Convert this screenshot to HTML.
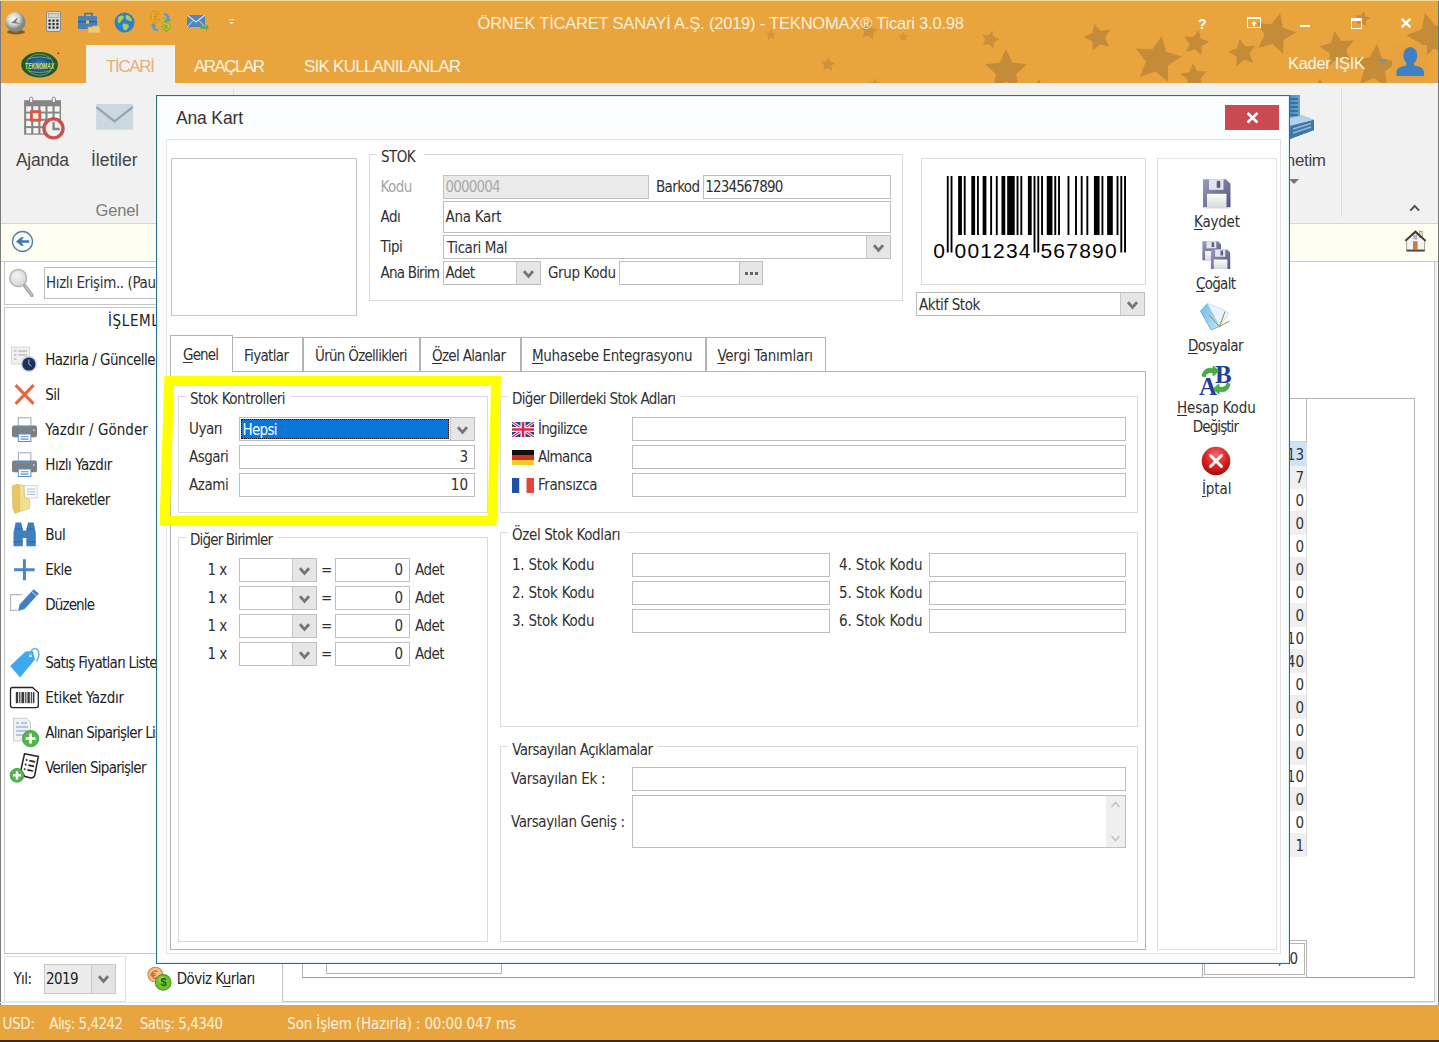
<!DOCTYPE html>
<html lang="tr"><head><meta charset="utf-8"><title>TEKNOMAX Ticari - Ana Kart</title><style>
html,body{margin:0;padding:0;background:#fff;width:1439px;height:1042px;overflow:hidden}
#w{position:relative;width:1439px;height:1042px;overflow:hidden;background:#fff}
#w>div,#w>svg,#w>span{position:absolute;box-sizing:content-box}
.t{white-space:nowrap;display:block}
u{text-decoration:underline;text-underline-offset:2px;text-decoration-thickness:1px;text-decoration-skip-ink:none}
</style></head><body><div id="w">
<div style="left:0px;top:0px;width:1439px;height:1042px;background:#ffffff;"></div>
<div style="left:0px;top:0px;width:1439px;height:83px;background:#E9A43E;"></div>
<div style="left:0px;top:0px;width:1439px;height:1px;background:#F3DC9A;"></div>
<svg style="left:700px;top:1px;" width="738" height="82" viewBox="700 1 738 82"><g fill="#C48C38"><polygon points="771.0,29.5 772.6,32.9 776.2,33.3 773.5,35.8 774.2,39.4 771.0,37.6 767.8,39.4 768.5,35.8 765.8,33.3 769.4,32.9" fill-opacity="0.6"/><polygon points="828.7,57.0 830.4,61.8 835.3,62.8 831.3,65.9 831.9,70.9 827.7,68.1 823.1,70.2 824.5,65.3 821.1,61.6 826.1,61.4" fill-opacity="0.75"/><polygon points="870.6,21.6 872.3,27.8 878.4,29.7 873.0,33.1 873.2,39.5 868.2,35.5 862.2,37.6 864.5,31.6 860.6,26.5 867.0,26.9" fill-opacity="0.75"/><polygon points="903.0,32.0 904.4,35.1 907.8,35.5 905.3,37.7 905.9,41.0 903.0,39.4 900.1,41.0 900.7,37.7 898.2,35.5 901.6,35.1" fill-opacity="0.6"/><polygon points="992.5,30.3 993.5,36.6 999.5,39.0 993.8,42.0 993.4,48.4 988.8,43.9 982.6,45.5 985.4,39.7 982.0,34.3 988.4,35.2" fill-opacity="0.85"/><polygon points="1006.0,49.0 1012.2,62.5 1026.9,64.2 1016.0,74.3 1018.9,88.8 1006.0,81.6 993.1,88.8 996.0,74.3 985.1,64.2 999.8,62.5"/><polygon points="875.0,78.0 876.7,81.7 880.7,82.1 877.7,84.9 878.5,88.9 875.0,86.9 871.5,88.9 872.3,84.9 869.3,82.1 873.3,81.7" fill-opacity="0.6"/><polygon points="1039.0,79.0 1041.0,83.3 1045.7,83.8 1042.2,87.0 1043.1,91.7 1039.0,89.4 1034.9,91.7 1035.8,87.0 1032.3,83.8 1037.0,83.3"/><polygon points="1094.2,23.5 1100.5,31.0 1110.2,29.6 1105.0,37.9 1109.3,46.6 1099.8,44.2 1092.8,51.0 1092.2,41.3 1083.5,36.7 1092.6,33.1"/><polygon points="1161.8,35.9 1166.0,51.8 1181.8,56.6 1167.9,65.5 1168.2,82.0 1155.5,71.6 1139.9,77.0 1145.9,61.6 1135.9,48.5 1152.3,49.4"/><polygon points="1198.8,29.8 1200.8,38.7 1209.4,41.6 1201.6,46.2 1201.5,55.3 1194.7,49.3 1186.0,52.0 1189.6,43.7 1184.3,36.2 1193.4,37.1"/><polygon points="1192.8,63.1 1197.5,71.2 1206.9,71.5 1200.5,78.5 1203.2,87.6 1194.6,83.7 1186.8,89.0 1187.8,79.6 1180.4,73.9 1189.6,71.9"/><polygon points="1239.5,38.8 1245.3,46.6 1255.1,45.8 1249.4,53.7 1253.3,62.7 1243.9,59.8 1236.6,66.2 1236.5,56.5 1228.1,51.5 1237.3,48.3"/><polygon points="1280.2,13.1 1282.9,27.4 1296.4,32.5 1283.8,39.5 1283.1,53.9 1272.5,44.0 1258.5,47.8 1264.7,34.7 1256.8,22.6 1271.1,24.4"/><polygon points="1334.3,30.8 1341.4,41.0 1353.8,40.3 1346.3,50.2 1350.8,61.9 1339.0,57.7 1329.4,65.6 1329.7,53.2 1319.2,46.4 1331.1,42.8"/><polygon points="1363.9,11.1 1365.3,16.3 1370.4,17.9 1365.9,20.8 1366.0,26.2 1361.8,22.8 1356.7,24.6 1358.7,19.5 1355.4,15.2 1360.8,15.5"/><polygon points="1377.0,44.1 1382.2,58.7 1397.4,61.8 1385.2,71.3 1386.8,86.7 1374.0,78.0 1359.9,84.4 1364.2,69.5 1353.8,58.0 1369.3,57.5"/><polygon points="1425.0,12.7 1435.5,25.9 1452.2,23.8 1443.0,37.8 1450.2,53.1 1433.9,48.6 1421.6,60.2 1420.8,43.4 1406.1,35.3 1421.8,29.3"/><polygon points="1320.0,78.0 1322.8,84.1 1329.5,84.9 1324.6,89.5 1325.9,96.1 1320.0,92.8 1314.1,96.1 1315.4,89.5 1310.5,84.9 1317.2,84.1"/></g></svg>
<span class="t" style="top:13.38px;font-size:16.5px;line-height:21px;font-family:'Liberation Sans',sans-serif;color:#FBEFD8;letter-spacing:-0.199px;left:477.50px;">ÖRNEK TİCARET SANAYİ A.Ş. (2019) - TEKNOMAX® Ticari 3.0.98</span>
<span class="t" style="top:14.75px;font-size:14px;line-height:18px;font-family:'Liberation Sans',sans-serif;color:#FFFFFF;font-weight:bold;left:1198.00px;">?</span>
<svg style="left:1247px;top:17px;" width="14" height="11" viewBox="0 0 14 11"><rect x="0.5" y="0.5" width="13" height="10" fill="none" stroke="#fff"/><rect x="0" y="0" width="14" height="2" fill="#fff"/><path d="M7 4 L4 7 H6 V9 H8 V7 H10 Z" fill="#fff"/></svg>
<div style="left:1300px;top:25px;width:10px;height:2px;background:#FFFFFF;"></div>
<svg style="left:1351px;top:18px;" width="11" height="11" viewBox="0 0 11 11"><rect x="0.5" y="0.5" width="10" height="10" fill="none" stroke="#fff"/><rect x="0" y="0" width="11" height="3" fill="#fff"/></svg>
<svg style="left:1401px;top:18px;" width="10" height="10" viewBox="0 0 10 10"><path d="M0.8 0.8 L9.2 9.2 M9.2 0.8 L0.8 9.2" stroke="#fff" stroke-width="2.3" fill="none"/></svg>
<svg style="left:4px;top:11px;" width="24" height="24" viewBox="0 0 24 24"><defs><radialGradient id="g1" cx="40%" cy="35%"><stop offset="0" stop-color="#fff"/><stop offset="0.6" stop-color="#cfd6d2"/><stop offset="1" stop-color="#7d8b86"/></radialGradient></defs><ellipse cx="12" cy="21" rx="9" ry="2.5" fill="#8a5a20"/><circle cx="11.5" cy="11" r="10" fill="url(#g1)"/><path d="M7 12 L14 6 L12 11 L17 13 Z" fill="#8b7b6b"/></svg>
<svg style="left:46px;top:11px;" width="15" height="21" viewBox="0 0 15 21"><rect x="0.5" y="0.5" width="14" height="20" rx="1.5" fill="#d9d9d9" stroke="#8a8a8a"/><rect x="2.5" y="2.5" width="10" height="4" fill="#c9d6c4" stroke="#888" stroke-width="0.5"/><g fill="#2a2a2a"><rect x="2.5" y="8.5" width="2.2" height="2.2"/><rect x="6.4" y="8.5" width="2.2" height="2.2"/><rect x="10.3" y="8.5" width="2.2" height="2.2"/><rect x="2.5" y="12" width="2.2" height="2.2"/><rect x="6.4" y="12" width="2.2" height="2.2"/><rect x="10.3" y="12" width="2.2" height="2.2"/><rect x="2.5" y="15.5" width="2.2" height="2.2"/><rect x="6.4" y="15.5" width="2.2" height="2.2"/><rect x="10.3" y="15.5" width="2.2" height="2.2"/></g></svg>
<svg style="left:78px;top:12px;" width="23" height="22" viewBox="0 0 23 22"><path d="M7 4 V1.5 H14 V4" fill="none" stroke="#3f74ad" stroke-width="1.6"/><rect x="0" y="4" width="19" height="13" rx="1" fill="#4a80b8"/><rect x="0" y="9" width="19" height="1.4" fill="#2f5f96"/><rect x="8" y="8.5" width="3" height="3" fill="#e9c56a"/><path d="M10 15 H14 L15 14 H22 V21 H10 Z" fill="#f0c878" stroke="#d6a850" stroke-width="0.6"/></svg>
<svg style="left:114px;top:12px;" width="21" height="21" viewBox="0 0 21 21"><circle cx="10.5" cy="10.5" r="10" fill="#2f7fd0"/><path d="M4 6 C6 3 9 3 10 5 C9 8 7 8 6 11 C5 12 3 10 4 6 Z M12 3 C15 3 18 6 18 9 C16 10 15 8 13 8 C12 6 11 5 12 3 Z M9 12 C11 11 14 12 15 14 C14 17 12 19 10 18 C9 16 8 14 9 12 Z" fill="#a8d04a"/></svg>
<span class="t" style="left:150px;top:8px;font:bold 17px 'Liberation Sans',sans-serif;color:#f2b91e;-webkit-text-stroke:0.5px #b9860b">€</span>
<span class="t" style="left:161px;top:15px;font:bold 17px 'Liberation Sans',sans-serif;color:#b9d33a;-webkit-text-stroke:0.5px #7c9a1c">$</span>
<svg style="left:149px;top:11px;" width="23" height="22" viewBox="0 0 23 22"><path d="M15 2 C19 2 21 5 20 8 L22 8 L18.5 11 L16 7.5 L18 7.5 C18 5.5 17 4.5 15 4 Z" fill="#5a9ad8"/><path d="M9 20 C5 20 3 18 3 15 L1 15 L4.5 12 L7.5 15.5 L5.5 15.5 C6 17 7 18 9 18 Z" fill="#5a9ad8"/></svg>
<svg style="left:187px;top:15px;" width="22" height="16" viewBox="0 0 22 16"><rect x="0" y="0" width="18" height="12" fill="#4f86c0"/><path d="M0 0 L9 7 L18 0" fill="none" stroke="#cfe0f2" stroke-width="1.3"/><path d="M0 12 L6 5.5 M18 12 L12 5.5" stroke="#cfe0f2" stroke-width="1"/><path d="M13 11 H19 V9 L22 12.5 L19 16 V14 H13 Z" fill="#6aa84f"/></svg>
<svg style="left:228px;top:19px;" width="8" height="6" viewBox="0 0 8 6"><rect x="1" y="0" width="5" height="1" fill="#fbe9c8"/><path d="M1 3 H6 L3.5 5.5 Z" fill="#fbe9c8"/></svg>
<svg style="left:20px;top:51px;" width="40" height="28" viewBox="0 0 40 28"><defs><radialGradient id="lg" cx="50%" cy="50%"><stop offset="0" stop-color="#3f86b5"/><stop offset="0.55" stop-color="#1f557d"/><stop offset="0.8" stop-color="#1b5a3a"/><stop offset="1" stop-color="#1f5f24"/></radialGradient></defs><ellipse cx="19.6" cy="13.7" rx="18.4" ry="12.7" fill="url(#lg)"/><ellipse cx="19.6" cy="13.7" rx="13.5" ry="10.6" fill="none" stroke="#b9cf5a" stroke-width="0.7" stroke-opacity="0.8"/><path d="M8 8 Q19.6 4 31 8 M8 19.5 Q19.6 23.5 31 19.5" fill="none" stroke="#cfe6f2" stroke-width="0.8" stroke-opacity="0.6"/><text x="19.6" y="17.6" font-family="Liberation Sans,sans-serif" font-weight="bold" font-style="italic" font-size="9.5" fill="#d3e23c" text-anchor="middle" textLength="29" lengthAdjust="spacingAndGlyphs">TEKNOMAX</text><circle cx="38.3" cy="2.3" r="0.9" fill="#6a4310"/></svg>
<div style="left:86px;top:45px;width:89px;height:38px;background:#F1F1F1;"></div>
<span class="t" style="top:56.21px;font-size:17px;line-height:22px;font-family:'Liberation Sans',sans-serif;color:#E5B074;letter-spacing:-1.347px;left:106.00px;">TİCARİ</span>
<span class="t" style="top:56.21px;font-size:17px;line-height:22px;font-family:'Liberation Sans',sans-serif;color:#FDF4E2;letter-spacing:-1.552px;left:194.00px;">ARAÇLAR</span>
<span class="t" style="top:56.21px;font-size:17px;line-height:22px;font-family:'Liberation Sans',sans-serif;color:#FDF4E2;letter-spacing:-0.759px;left:304.00px;">SIK KULLANILANLAR</span>
<span class="t" style="top:53.38px;font-size:16.5px;line-height:21px;font-family:'Liberation Sans',sans-serif;color:#FDF4E2;letter-spacing:-0.311px;left:1288.00px;">Kader IŞIK</span>
<svg style="left:1378px;top:59px;" width="9" height="6" viewBox="0 0 9 6"><path d="M0 0 H9 L4.5 5 Z" fill="#6f93bd"/></svg>
<div style="left:1392px;top:45px;width:35px;height:36px;background:#E6A23F;"></div>
<svg style="left:1395px;top:45px;" width="31" height="32" viewBox="0 0 31 32"><ellipse cx="15.3" cy="10.6" rx="7" ry="8.7" fill="#3F80C4"/><path d="M11.5 17 H19 V20.5 C24 21 28.5 23 29 27 V31 H1.5 V27 C2 23 6.5 21 11.5 20.5 Z" fill="#3F80C4"/></svg>
<div style="left:0px;top:83px;width:1439px;height:140px;background:#F1F1F1;"></div>
<div style="left:0px;top:223px;width:1439px;height:1px;background:#D5D5D5;"></div>
<svg style="left:20px;top:94px;" width="50" height="50" viewBox="20 94 50 50"><rect x="24.1" y="100.2" width="36.9" height="34.5" fill="#858585"/><g fill="#f6f6f6"><rect x="26.2" y="106.3" width="5" height="5.3"/><rect x="33.3" y="106.3" width="5" height="5.3"/><rect x="40.4" y="106.3" width="5" height="5.3"/><rect x="47.5" y="106.3" width="5" height="5.3"/><rect x="54.6" y="106.3" width="5" height="5.3"/><rect x="26.2" y="113.5" width="5" height="5.3"/><rect x="33.3" y="113.5" width="5" height="5.3"/><rect x="40.4" y="113.5" width="5" height="5.3"/><rect x="47.5" y="113.5" width="5" height="5.3"/><rect x="54.6" y="113.5" width="5" height="5.3"/><rect x="26.2" y="120.8" width="5" height="5.3"/><rect x="33.3" y="120.8" width="5" height="5.3"/><rect x="40.4" y="120.8" width="5" height="5.3"/><rect x="47.5" y="120.8" width="5" height="5.3"/><rect x="54.6" y="120.8" width="5" height="5.3"/><rect x="26.2" y="128.1" width="5" height="5.3"/><rect x="33.3" y="128.1" width="5" height="5.3"/><rect x="40.4" y="128.1" width="5" height="5.3"/><rect x="47.5" y="128.1" width="5" height="5.3"/><rect x="54.6" y="128.1" width="5" height="5.3"/></g><rect x="29.6" y="97.2" width="3.2" height="5.4" rx="1.4" fill="#f1f1f1" stroke="#858585" stroke-width="1"/><rect x="52.2" y="97.2" width="3.2" height="5.4" rx="1.4" fill="#f1f1f1" stroke="#858585" stroke-width="1"/><rect x="31.4" y="111.6" width="8.4" height="8.6" fill="#f3ece8" stroke="#D8593F" stroke-width="2.8"/><circle cx="53.5" cy="128.4" r="9.5" fill="#f1f1f1" stroke="#C8524B" stroke-width="3.4"/><path d="M53.6 122.2 V129 H59.6" fill="none" stroke="#8d7f8d" stroke-width="2.4"/></svg>
<span class="t" style="top:149.04px;font-size:17.5px;line-height:23px;font-family:'Liberation Sans',sans-serif;color:#444;letter-spacing:-0.300px;left:16.00px;">Ajanda</span>
<svg style="left:94px;top:102px;" width="42" height="30" viewBox="94 102 42 30"><rect x="96.1" y="104" width="36.9" height="25.8" rx="1.2" fill="#CCD8E0"/><path d="M96.4 107.2 L114.5 121.4 L132.7 107.2" fill="none" stroke="#8FA3B0" stroke-width="2.1"/></svg>
<span class="t" style="top:149.04px;font-size:17.5px;line-height:23px;font-family:'Liberation Sans',sans-serif;color:#444;letter-spacing:-0.027px;left:91.00px;">İletiler</span>
<span class="t" style="top:200.38px;font-size:16.5px;line-height:21px;font-family:'Liberation Sans',sans-serif;color:#7c7c7c;letter-spacing:-0.133px;left:95.50px;">Genel</span>
<div style="left:233px;top:90px;width:1px;height:127px;background:#DCDCDC;"></div>
<svg style="left:1276px;top:94px;" width="40" height="48" viewBox="0 0 40 48"><defs><linearGradient id="bt" x1="0" x2="1"><stop offset="0" stop-color="#3f7fb5"/><stop offset="1" stop-color="#6aa3d2"/></linearGradient></defs>
<rect x="8" y="1" width="16" height="26" fill="url(#bt)"/><path d="M10 5 H22 M10 9 H22 M10 13 H22 M10 17 H22 M10 21 H22" stroke="#2f6596" stroke-width="1.6"/>
<path d="M2 26 L26 21.5 L38 26 L38 36 L14 45 L2 39 Z" fill="#4a86b8"/><path d="M2 26 L26 21.5 L38 26 L14 32 Z" fill="#b4d3ea"/><path d="M14 32 L38 26 L38 36 L14 45 Z" fill="#3f78a8"/><path d="M2 26 L14 32 L14 45 L2 39 Z" fill="#cfe2f2"/><path d="M17 35 L35 29.5 M17 39 L35 33" stroke="#8fb8da" stroke-width="1.4"/><path d="M4 30 L12 34 M4 34 L12 38" stroke="#9fc0dc" stroke-width="1.2"/></svg>
<span class="t" style="top:149.71px;font-size:17px;line-height:22px;font-family:'Liberation Sans',sans-serif;color:#444;letter-spacing:-0.350px;right:113.35px;">Yönetim</span>
<svg style="left:1289px;top:179px;" width="10" height="5" viewBox="0 0 10 5"><path d="M0 0 H10 L5 5 Z" fill="#777"/></svg>
<div style="left:1341px;top:87px;width:1px;height:130px;background:#DCDCDC;"></div>
<svg style="left:1409px;top:204px;" width="12" height="8" viewBox="0 0 12 8"><path d="M1.2 6.6 L5.7 2 L10.2 6.6" fill="none" stroke="#555" stroke-width="2"/></svg>
<div style="left:0px;top:224px;width:1439px;height:36px;background:#FFFEF1;"></div>
<div style="left:0px;top:261px;width:1439px;height:1px;background:#C9C9C9;"></div>
<svg style="left:11px;top:230px;" width="23" height="23" viewBox="0 0 23 23"><circle cx="11.5" cy="11.5" r="10" fill="#FDFEFA" stroke="#4F7FAE" stroke-width="1.3"/><path d="M18.2 10.3 H10.5 L13 7.2 H10.2 L5 11.5 L10.2 15.8 H13 L10.5 12.7 H18.2 Z" fill="#3D78B5"/></svg>
<svg style="left:1404px;top:229px;" width="23" height="24" viewBox="0 0 23 24"><path d="M2.6 11 V22 H20.6 V11 L11.4 3 Z" fill="#F3F3F1" stroke="#8a8a86" stroke-width="0.8"/><rect x="2.6" y="20.6" width="18" height="1.8" fill="#4a4740"/><rect x="15.6" y="2.2" width="2.6" height="6" fill="#F0E6D2" stroke="#7d786c" stroke-width="0.7"/><path d="M11.4 1.3 L0.6 11.2 L2 12.6 L11.4 4.2 L20.9 12.6 L22.3 11.2 Z" fill="#3E3C34"/><rect x="9" y="12.3" width="4.6" height="8.6" fill="#CB7C3C"/><rect x="9.8" y="6.6" width="3" height="3.4" fill="#B9BEC9" stroke="#8e8e92" stroke-width="0.5"/></svg>
<div style="left:0px;top:1px;width:1px;height:1041px;background:#7a7a7a;"></div>
<div style="left:1438px;top:1px;width:1px;height:1041px;background:#767676;"></div>
<div style="left:4px;top:261px;width:277px;height:42px;background:#fff;border:1px solid #C6C6C6;"></div>
<svg style="left:7px;top:267px;" width="28" height="32" viewBox="0 0 28 32"><defs><radialGradient id="mg" cx="40%" cy="35%"><stop offset="0" stop-color="#f4f4f4"/><stop offset="1" stop-color="#dcdcdc"/></radialGradient></defs><path d="M17.5 18.5 L25 28.5" stroke="#9c9c9c" stroke-width="3.4" stroke-linecap="round"/><path d="M18 19 L25 28.5" stroke="#cfcfcf" stroke-width="1.2" stroke-linecap="round"/><circle cx="11.2" cy="11" r="8.4" fill="url(#mg)" stroke="#b4b4b4" stroke-width="1.5"/></svg>
<div style="left:44px;top:267px;width:237px;height:30px;background:#fff;border:1px solid #BDBDBD;"></div>
<span class="t" style="top:273.11px;font-size:15px;line-height:20px;font-family:'DejaVu Sans Condensed','Liberation Sans',sans-serif;color:#333;letter-spacing:-0.385px;left:46.00px;">Hızlı Erişim.. (Pause)</span>
<div style="left:4px;top:307px;width:277px;height:645px;background:#fff;border:1px solid #C6C6C6;"></div>
<span class="t" style="top:311.11px;font-size:15px;line-height:20px;font-family:'DejaVu Sans Condensed','Liberation Sans',sans-serif;color:#222;letter-spacing:0.621px;left:108.00px;">İŞLEMLER</span>
<span class="t" style="top:350.11px;font-size:15px;line-height:20px;font-family:'DejaVu Sans Condensed','Liberation Sans',sans-serif;color:#222;letter-spacing:-0.503px;left:45.20px;">Hazırla / Güncelle</span>
<span class="t" style="top:385.11px;font-size:15px;line-height:20px;font-family:'DejaVu Sans Condensed','Liberation Sans',sans-serif;color:#222;letter-spacing:-0.550px;left:45.20px;">Sil</span>
<span class="t" style="top:420.11px;font-size:15px;line-height:20px;font-family:'DejaVu Sans Condensed','Liberation Sans',sans-serif;color:#222;letter-spacing:0.028px;left:45.20px;">Yazdır / Gönder</span>
<span class="t" style="top:455.11px;font-size:15px;line-height:20px;font-family:'DejaVu Sans Condensed','Liberation Sans',sans-serif;color:#222;letter-spacing:-0.461px;left:45.20px;">Hızlı Yazdır</span>
<span class="t" style="top:490.11px;font-size:15px;line-height:20px;font-family:'DejaVu Sans Condensed','Liberation Sans',sans-serif;color:#222;letter-spacing:-0.591px;left:45.20px;">Hareketler</span>
<span class="t" style="top:525.11px;font-size:15px;line-height:20px;font-family:'DejaVu Sans Condensed','Liberation Sans',sans-serif;color:#222;letter-spacing:-0.550px;left:45.20px;">Bul</span>
<span class="t" style="top:560.11px;font-size:15px;line-height:20px;font-family:'DejaVu Sans Condensed','Liberation Sans',sans-serif;color:#222;letter-spacing:-0.550px;left:45.20px;">Ekle</span>
<span class="t" style="top:595.11px;font-size:15px;line-height:20px;font-family:'DejaVu Sans Condensed','Liberation Sans',sans-serif;color:#222;letter-spacing:-0.859px;left:45.20px;">Düzenle</span>
<span class="t" style="top:653.11px;font-size:15px;line-height:20px;font-family:'DejaVu Sans Condensed','Liberation Sans',sans-serif;color:#222;letter-spacing:-0.708px;left:45.20px;">Satış Fiyatları Listesi</span>
<span class="t" style="top:688.11px;font-size:15px;line-height:20px;font-family:'DejaVu Sans Condensed','Liberation Sans',sans-serif;color:#222;letter-spacing:-0.277px;left:45.20px;">Etiket Yazdır</span>
<span class="t" style="top:723.11px;font-size:15px;line-height:20px;font-family:'DejaVu Sans Condensed','Liberation Sans',sans-serif;color:#222;letter-spacing:-0.765px;left:45.20px;">Alınan Siparişler Listesi</span>
<span class="t" style="top:758.11px;font-size:15px;line-height:20px;font-family:'DejaVu Sans Condensed','Liberation Sans',sans-serif;color:#222;letter-spacing:-0.727px;left:45.20px;">Verilen Siparişler</span>
<svg style="left:8px;top:340px;" width="36" height="446" viewBox="8 340 36 446"><rect x="11.5" y="347" width="18" height="17" fill="#f1f1f1" stroke="#cfcfcf" stroke-width="0.8"/><path d="M14 351 H16.5 M18.5 351 H27 M14 355 H16.5 M18.5 355 H27 M14 359 H16.5" stroke="#bdbdbd" stroke-width="1.3"/><circle cx="28.9" cy="364" r="8" fill="#c9d2de"/><circle cx="28.9" cy="364" r="6.6" fill="#1f3058"/><path d="M28.9 359.5 V364.2 L31.5 366" stroke="#aebbd2" stroke-width="1" fill="none"/><path d="M15.6 385.2 L33.6 403.8 M33.6 385.2 L15.6 403.8" stroke="#E0694A" stroke-width="3.1"/><g transform="translate(0,417.3)"><rect x="18.3" y="0.5" width="12.6" height="11" fill="#fff" stroke="#9aa7b4" stroke-width="1"/><rect x="12" y="8.3" width="25" height="11.6" rx="2" fill="#7b7f86"/><rect x="17.5" y="9.6" width="14.2" height="1.3" fill="#5a93cc"/><rect x="18.3" y="16.7" width="12.6" height="7.5" fill="#fff" stroke="#5b8fc4" stroke-width="1"/><path d="M20.6 19.4 H28.6 M20.6 21.8 H28.6" stroke="#5b8fc4" stroke-width="1.1"/><rect x="33" y="12" width="1.6" height="1.6" fill="#d7dde3"/></g><g transform="translate(0,452.3)"><rect x="18.3" y="0.5" width="12.6" height="11" fill="#fff" stroke="#9aa7b4" stroke-width="1"/><rect x="12" y="8.3" width="25" height="11.6" rx="2" fill="#7b7f86"/><rect x="17.5" y="9.6" width="14.2" height="1.3" fill="#5a93cc"/><rect x="18.3" y="16.7" width="12.6" height="7.5" fill="#fff" stroke="#5b8fc4" stroke-width="1"/><path d="M20.6 19.4 H28.6 M20.6 21.8 H28.6" stroke="#5b8fc4" stroke-width="1.1"/><rect x="33" y="12" width="1.6" height="1.6" fill="#d7dde3"/></g><rect x="24.5" y="485.5" width="12.6" height="12.6" fill="#fafafa" stroke="#cfcfcf" stroke-width="0.8"/><path d="M27 489 H35 M27 491.7 H35 M27 494.4 H35" stroke="#a9c3e2" stroke-width="1.1"/><path d="M12.3 486 L17.5 484.3 L19.5 486.5 L19.8 511.5 L15 513.4 L12.8 508 Z" fill="#E6C763" stroke="#d3b24c" stroke-width="0.6"/><path d="M17.5 484.3 L23.3 485.2 L24.6 497.5 L29.8 499.2 L29.5 508.5 L19.8 511.5 L19.5 486.5 Z" fill="#F3DF92" stroke="#d9bc5a" stroke-width="0.6"/><g fill="#3F7FC0"><path d="M15.6 522.5 H21.2 L22.8 529 V546.3 H13.5 V533 Z"/><path d="M33.6 522.5 H28 L26.4 529 V546.3 H35.8 V533 Z"/><rect x="22" y="530.5" width="5.5" height="7.5"/></g><path d="M13.5 541.8 H22.8 M26.4 541.8 H35.8 M15 529 H22.6 M26.6 529 H34.2" stroke="#2f68a6" stroke-width="1.1"/><path d="M24.4 559.3 V580.2 M14.1 569.8 H34.7" stroke="#4A86C5" stroke-width="3"/><path d="M22 594.6 H10.6 V610.4 H17.5" fill="none" stroke="#b9b9b9" stroke-width="1.2"/><path d="M18.2 611 L19.6 604.6 L33.6 589.2 L38.8 593.6 L24.6 609 Z" fill="#3F7FC6"/><path d="M31.6 591.5 L36.6 595.9" stroke="#cfe0f4" stroke-width="1"/><path d="M10.2 666 L25.5 651.5 L32.8 651 L35 659.5 L20 677.5 Z" fill="#3FA9F0"/><circle cx="30.5" cy="655.6" r="1.5" fill="#fff"/><path d="M30.5 655.6 C29.5 649 37 645.5 38.6 652 C39.2 655.5 38.3 659 36.3 661.5" fill="none" stroke="#55B2EE" stroke-width="1.5"/><path d="M12.5 687.5 H32.5 L38.3 692.5 V705.5 Q38.3 707.6 36.2 707.6 H12.5 Q10.5 707.6 10.5 705.5 V689.6 Q10.5 687.5 12.5 687.5 Z" fill="#fff" stroke="#222" stroke-width="1.3"/><g fill="#3a3a3a"><rect x="15.8" y="692" width="2.4" height="11.2"/><rect x="19.2" y="692" width="1.2" height="11.2"/><rect x="21.4" y="692" width="2.8" height="11.2"/><rect x="25.2" y="692" width="1.2" height="11.2"/><rect x="27.4" y="692" width="2.4" height="11.2"/><rect x="30.8" y="692" width="1.1" height="11.2"/><rect x="32.8" y="692" width="1.6" height="11.2"/></g><path d="M13.5 718.2 H26.5 L30.5 722 V741 H13.5 Z" fill="#eef1f5" stroke="#c3cad2" stroke-width="0.9"/><path d="M16 723 H19 M21 723 H27 M16 727 H28 M16 731 H28 M16 735 H24" stroke="#a3bbd6" stroke-width="1.4"/><circle cx="30.6" cy="738.6" r="8.2" fill="#4FB848"/><circle cx="30.6" cy="738.6" r="8.2" fill="none" stroke="#3f9a3a" stroke-width="0.8"/><path d="M30.6 733.6 V743.6 M25.6 738.6 H35.6" stroke="#fff" stroke-width="2.8"/><path d="M24.5 753.8 L38.3 756.6 L34.6 775.8 Q33 778.5 30 777.8 L24.8 776.5 L20.8 770.5 Z" fill="#fff" stroke="#222" stroke-width="1.5" stroke-linejoin="round"/><path d="M25.8 759.8 L27.4 760.1 M29.4 760.6 L35 761.8 M24.8 764.4 L26.4 764.7 M28.4 765.2 L34 766.4 M23.8 769 L25.4 769.3 M27.4 769.8 L33 771" stroke="#222" stroke-width="1.7"/><circle cx="17" cy="775.3" r="6.9" fill="#4FB848" stroke="#3f9a3a" stroke-width="0.8"/><path d="M17 771.2 V779.4 M12.9 775.3 H21.1" stroke="#fff" stroke-width="2.4"/></svg>
<div style="left:4px;top:956px;width:120px;height:44px;background:#fff;border:1px solid #E2E2E2;"></div>
<span class="t" style="top:969.11px;font-size:15px;line-height:20px;font-family:'DejaVu Sans Condensed','Liberation Sans',sans-serif;color:#222;letter-spacing:-0.550px;left:13.40px;">Yıl:</span>
<div style="left:44px;top:964px;width:70px;height:28px;background:#EBEBEB;border:1px solid #C9C9C9;"></div>
<div style="left:91px;top:965px;width:24px;height:28px;background:#E4E4E4;"></div>
<div style="left:91px;top:965px;width:1px;height:28px;background:#C9C9C9;"></div>
<svg style="left:98px;top:975px;" width="11" height="9" viewBox="0 0 11 9"><path d="M1 1.2 L5.5 6.4 L10 1.2" fill="none" stroke="#767676" stroke-width="2.8"/></svg>
<span class="t" style="top:969.11px;font-size:15px;line-height:20px;font-family:'DejaVu Sans Condensed','Liberation Sans',sans-serif;color:#222;letter-spacing:-0.550px;left:46.00px;">2019</span>
<svg style="left:147px;top:966px;" width="25" height="25" viewBox="0 0 25 25"><circle cx="8.3" cy="8.6" r="7.4" fill="#F3BE8C" stroke="#D08A4A" stroke-width="1.1"/><path d="M10.6 5.6 C8 3.8 5 5.6 5 8.6 C5 11.6 8 13.4 10.6 11.6 M3.4 7.6 H8.6 M3.4 9.6 H8.6" fill="none" stroke="#C4691E" stroke-width="1.2"/><circle cx="16.2" cy="16.4" r="7.8" fill="#6FC22E" stroke="#4A9A1E" stroke-width="1.1"/><circle cx="14.6" cy="13.6" r="3.6" fill="#9BDB5A" fill-opacity="0.55"/></svg>
<span class="t" style="left:160px;top:976px;font:bold 11px/13px 'Liberation Sans',sans-serif;color:#27600F;width:7px;text-align:center">$</span>
<span class="t" style="top:969.11px;font-size:15px;line-height:20px;font-family:'DejaVu Sans Condensed','Liberation Sans',sans-serif;color:#222;letter-spacing:-0.565px;left:176.80px;">Döviz K<u>u</u>rları</span>
<div style="left:282px;top:262px;width:1px;height:740px;background:#C6C6C6;"></div>
<div style="left:282px;top:1001px;width:1153px;height:1px;background:#C6C6C6;"></div>
<div style="left:1434px;top:262px;width:1px;height:740px;background:#C6C6C6;"></div>
<div style="left:1435px;top:262px;width:3px;height:743px;background:#F4F4F4;"></div>
<div style="left:302px;top:398px;width:1111px;height:578px;background:#fff;border:1px solid #B5B5B5;"></div>
<div style="left:302px;top:977px;width:1113px;height:1px;background:#9a9a9a;"></div>
<div style="left:1306px;top:399px;width:1px;height:43px;background:#B9B9B9;"></div>
<div style="left:1306px;top:442px;width:1px;height:414px;background:#E0E0E0;"></div>
<div style="left:303px;top:441px;width:1003px;height:1px;background:#D8D8D8;"></div>
<div style="left:303px;top:442px;width:1003px;height:24px;background:#CFE3F6;"></div>
<span class="t" style="top:444.61px;font-size:15px;line-height:20px;font-family:'DejaVu Sans Condensed','Liberation Sans',sans-serif;color:#333;right:135.00px;">13</span>
<div style="left:303px;top:466px;width:1003px;height:23px;background:#EFEFEF;"></div>
<span class="t" style="top:467.61px;font-size:15px;line-height:20px;font-family:'DejaVu Sans Condensed','Liberation Sans',sans-serif;color:#333;right:135.00px;">7</span>
<div style="left:303px;top:489px;width:1003px;height:23px;background:#fff;"></div>
<div style="left:303px;top:511px;width:1003px;height:1px;background:#EDEDED;"></div>
<span class="t" style="top:490.61px;font-size:15px;line-height:20px;font-family:'DejaVu Sans Condensed','Liberation Sans',sans-serif;color:#333;right:135.00px;">0</span>
<div style="left:303px;top:512px;width:1003px;height:23px;background:#EFEFEF;"></div>
<span class="t" style="top:513.61px;font-size:15px;line-height:20px;font-family:'DejaVu Sans Condensed','Liberation Sans',sans-serif;color:#333;right:135.00px;">0</span>
<div style="left:303px;top:535px;width:1003px;height:23px;background:#fff;"></div>
<div style="left:303px;top:557px;width:1003px;height:1px;background:#EDEDED;"></div>
<span class="t" style="top:536.61px;font-size:15px;line-height:20px;font-family:'DejaVu Sans Condensed','Liberation Sans',sans-serif;color:#333;right:135.00px;">0</span>
<div style="left:303px;top:558px;width:1003px;height:23px;background:#EFEFEF;"></div>
<span class="t" style="top:559.61px;font-size:15px;line-height:20px;font-family:'DejaVu Sans Condensed','Liberation Sans',sans-serif;color:#333;right:135.00px;">0</span>
<div style="left:303px;top:581px;width:1003px;height:23px;background:#fff;"></div>
<div style="left:303px;top:603px;width:1003px;height:1px;background:#EDEDED;"></div>
<span class="t" style="top:582.61px;font-size:15px;line-height:20px;font-family:'DejaVu Sans Condensed','Liberation Sans',sans-serif;color:#333;right:135.00px;">0</span>
<div style="left:303px;top:604px;width:1003px;height:23px;background:#EFEFEF;"></div>
<span class="t" style="top:605.61px;font-size:15px;line-height:20px;font-family:'DejaVu Sans Condensed','Liberation Sans',sans-serif;color:#333;right:135.00px;">0</span>
<div style="left:303px;top:627px;width:1003px;height:23px;background:#fff;"></div>
<div style="left:303px;top:649px;width:1003px;height:1px;background:#EDEDED;"></div>
<span class="t" style="top:628.61px;font-size:15px;line-height:20px;font-family:'DejaVu Sans Condensed','Liberation Sans',sans-serif;color:#333;right:135.00px;">10</span>
<div style="left:303px;top:650px;width:1003px;height:23px;background:#EFEFEF;"></div>
<span class="t" style="top:651.61px;font-size:15px;line-height:20px;font-family:'DejaVu Sans Condensed','Liberation Sans',sans-serif;color:#333;right:135.00px;">40</span>
<div style="left:303px;top:673px;width:1003px;height:23px;background:#fff;"></div>
<div style="left:303px;top:695px;width:1003px;height:1px;background:#EDEDED;"></div>
<span class="t" style="top:674.61px;font-size:15px;line-height:20px;font-family:'DejaVu Sans Condensed','Liberation Sans',sans-serif;color:#333;right:135.00px;">0</span>
<div style="left:303px;top:696px;width:1003px;height:23px;background:#EFEFEF;"></div>
<span class="t" style="top:697.61px;font-size:15px;line-height:20px;font-family:'DejaVu Sans Condensed','Liberation Sans',sans-serif;color:#333;right:135.00px;">0</span>
<div style="left:303px;top:719px;width:1003px;height:23px;background:#fff;"></div>
<div style="left:303px;top:741px;width:1003px;height:1px;background:#EDEDED;"></div>
<span class="t" style="top:720.61px;font-size:15px;line-height:20px;font-family:'DejaVu Sans Condensed','Liberation Sans',sans-serif;color:#333;right:135.00px;">0</span>
<div style="left:303px;top:742px;width:1003px;height:23px;background:#EFEFEF;"></div>
<span class="t" style="top:743.61px;font-size:15px;line-height:20px;font-family:'DejaVu Sans Condensed','Liberation Sans',sans-serif;color:#333;right:135.00px;">0</span>
<div style="left:303px;top:765px;width:1003px;height:23px;background:#fff;"></div>
<div style="left:303px;top:787px;width:1003px;height:1px;background:#EDEDED;"></div>
<span class="t" style="top:766.61px;font-size:15px;line-height:20px;font-family:'DejaVu Sans Condensed','Liberation Sans',sans-serif;color:#333;right:135.00px;">10</span>
<div style="left:303px;top:788px;width:1003px;height:23px;background:#EFEFEF;"></div>
<span class="t" style="top:789.61px;font-size:15px;line-height:20px;font-family:'DejaVu Sans Condensed','Liberation Sans',sans-serif;color:#333;right:135.00px;">0</span>
<div style="left:303px;top:811px;width:1003px;height:23px;background:#fff;"></div>
<div style="left:303px;top:833px;width:1003px;height:1px;background:#EDEDED;"></div>
<span class="t" style="top:812.61px;font-size:15px;line-height:20px;font-family:'DejaVu Sans Condensed','Liberation Sans',sans-serif;color:#333;right:135.00px;">0</span>
<div style="left:303px;top:834px;width:1003px;height:23px;background:#EFEFEF;"></div>
<span class="t" style="top:835.61px;font-size:15px;line-height:20px;font-family:'DejaVu Sans Condensed','Liberation Sans',sans-serif;color:#333;right:135.00px;">1</span>
<div style="left:326px;top:940px;width:174px;height:32px;background:#fff;border:1px solid #B5B5B5;"></div>
<div style="left:1202px;top:940px;width:103px;height:36px;background:#fff;border:1px solid #B5B5B5;"></div>
<div style="left:1204px;top:943px;width:99px;height:30px;background:#fff;border:1px solid #B5B5B5;"></div>
<span class="t" style="top:949.11px;font-size:15px;line-height:20px;font-family:'DejaVu Sans Condensed','Liberation Sans',sans-serif;color:#333;letter-spacing:-0.600px;right:141.60px;">0,00</span>
<div style="left:0px;top:1002px;width:1439px;height:1px;background:#E8E8E8;"></div>
<div style="left:0px;top:1005px;width:1439px;height:35px;background:#E9A43E;"></div>
<div style="left:0px;top:1040px;width:1439px;height:2px;background:#3a2a18;"></div>
<span class="t" style="top:1014.11px;font-size:15px;line-height:20px;font-family:'DejaVu Sans Condensed','Liberation Sans',sans-serif;color:#FBF1DE;letter-spacing:-0.300px;left:2.50px;">USD:</span>
<span class="t" style="top:1014.11px;font-size:15px;line-height:20px;font-family:'DejaVu Sans Condensed','Liberation Sans',sans-serif;color:#FBF1DE;letter-spacing:-0.528px;left:49.20px;">Alış: 5,4242</span>
<span class="t" style="top:1014.11px;font-size:15px;line-height:20px;font-family:'DejaVu Sans Condensed','Liberation Sans',sans-serif;color:#FBF1DE;letter-spacing:-0.454px;left:139.70px;">Satış: 5,4340</span>
<span class="t" style="top:1014.11px;font-size:15px;line-height:20px;font-family:'DejaVu Sans Condensed','Liberation Sans',sans-serif;color:#FBF1DE;letter-spacing:-0.161px;left:287.30px;">Son İşlem (Hazırla) : 00:00 047 ms</span>
<div style="left:156px;top:95px;width:1132px;height:867px;background:#FBFDFE;border:1px solid #2C6E8E;"></div>
<div style="left:157px;top:96px;width:1130px;height:865px;border:1px solid #E4F0F7;"></div>
<span class="t" style="top:107.04px;font-size:17.5px;line-height:23px;font-family:'Liberation Sans',sans-serif;color:#333;letter-spacing:-0.158px;left:176.00px;">Ana Kart</span>
<div style="left:1225px;top:105px;width:54px;height:25px;background:#CB4A52;"></div>
<svg style="left:1246px;top:111px;" width="13" height="13" viewBox="0 0 13 13"><path d="M1.5 2 L11.5 11.5 M11.5 2 L1.5 11.5" stroke="#fff" stroke-width="2.6"/></svg>
<div style="left:166px;top:139px;width:1113px;height:813px;background:#fff;border:1px solid #E3E3E3;"></div>
<div style="left:171px;top:158px;width:184px;height:156px;background:#fff;border:1px solid #C4C4C4;"></div>
<div style="left:369px;top:154px;width:532px;height:145px;border:1px solid #DADADA;"></div>
<div style="left:377px;top:154px;width:47px;height:1px;background:#fff;"></div>
<span class="t" style="top:147.11px;font-size:15px;line-height:20px;font-family:'DejaVu Sans Condensed','Liberation Sans',sans-serif;color:#303030;letter-spacing:-0.550px;left:381.00px;">STOK</span>
<span class="t" style="top:177.11px;font-size:15px;line-height:20px;font-family:'DejaVu Sans Condensed','Liberation Sans',sans-serif;color:#A3A3A3;letter-spacing:-0.550px;left:380.50px;">Kodu</span>
<div style="left:443px;top:175px;width:204px;height:22px;background:#EAEAEA;border:1px solid #C2C2C2;"></div>
<span class="t" style="top:177.11px;font-size:15px;line-height:20px;font-family:'DejaVu Sans Condensed','Liberation Sans',sans-serif;color:#ABABAB;letter-spacing:-0.849px;left:445.50px;">0000004</span>
<span class="t" style="top:177.11px;font-size:15px;line-height:20px;font-family:'DejaVu Sans Condensed','Liberation Sans',sans-serif;color:#303030;letter-spacing:-0.637px;left:656.00px;">Barkod</span>
<div style="left:703px;top:175px;width:186px;height:22px;background:#fff;border:1px solid #BEBEBE;"></div>
<span class="t" style="top:177.11px;font-size:15px;line-height:20px;font-family:'DejaVu Sans Condensed','Liberation Sans',sans-serif;color:#303030;letter-spacing:-0.872px;left:705.30px;">1234567890</span>
<span class="t" style="top:207.11px;font-size:15px;line-height:20px;font-family:'DejaVu Sans Condensed','Liberation Sans',sans-serif;color:#303030;letter-spacing:-0.550px;left:380.50px;">Adı</span>
<div style="left:443px;top:201px;width:446px;height:30px;background:#fff;border:1px solid #BEBEBE;"></div>
<span class="t" style="top:207.11px;font-size:15px;line-height:20px;font-family:'DejaVu Sans Condensed','Liberation Sans',sans-serif;color:#303030;letter-spacing:-0.290px;left:445.50px;">Ana Kart</span>
<span class="t" style="top:237.11px;font-size:15px;line-height:20px;font-family:'DejaVu Sans Condensed','Liberation Sans',sans-serif;color:#303030;letter-spacing:-0.550px;left:380.50px;">Tipi</span>
<div style="left:443px;top:235px;width:446px;height:22px;background:#fff;border:1px solid #BEBEBE;"></div>
<div style="left:866px;top:236px;width:24px;height:22px;background:#E6E6E6;"></div>
<div style="left:866px;top:236px;width:1px;height:22px;background:#C8C8C8;"></div>
<svg style="left:872.5px;top:243.5px;" width="11" height="9" viewBox="0 0 11 9"><path d="M1 1.2 L5.5 6.4 L10 1.2" fill="none" stroke="#767676" stroke-width="2.8"/></svg>
<span class="t" style="top:238.11px;font-size:15px;line-height:20px;font-family:'DejaVu Sans Condensed','Liberation Sans',sans-serif;color:#303030;letter-spacing:-0.441px;left:447.00px;">Ticari Mal</span>
<span class="t" style="top:262.61px;font-size:15px;line-height:20px;font-family:'DejaVu Sans Condensed','Liberation Sans',sans-serif;color:#303030;letter-spacing:-0.787px;left:380.50px;">Ana Birim</span>
<div style="left:443px;top:261px;width:96px;height:22px;background:#fff;border:1px solid #BEBEBE;"></div>
<div style="left:516px;top:262px;width:24px;height:22px;background:#E6E6E6;"></div>
<div style="left:516px;top:262px;width:1px;height:22px;background:#C8C8C8;"></div>
<svg style="left:522.5px;top:269.5px;" width="11" height="9" viewBox="0 0 11 9"><path d="M1 1.2 L5.5 6.4 L10 1.2" fill="none" stroke="#767676" stroke-width="2.8"/></svg>
<span class="t" style="top:262.61px;font-size:15px;line-height:20px;font-family:'DejaVu Sans Condensed','Liberation Sans',sans-serif;color:#303030;letter-spacing:-0.550px;left:445.50px;">Adet</span>
<span class="t" style="top:262.61px;font-size:15px;line-height:20px;font-family:'DejaVu Sans Condensed','Liberation Sans',sans-serif;color:#303030;letter-spacing:-0.363px;left:548.00px;">Grup Kodu</span>
<div style="left:619px;top:261px;width:119px;height:22px;background:#fff;border:1px solid #BEBEBE;"></div>
<div style="left:739px;top:261px;width:22px;height:22px;background:#E6E6E6;border:1px solid #BEBEBE;"></div>
<div style="left:745px;top:272px;width:3px;height:3px;background:#666;"></div>
<div style="left:750px;top:272px;width:3px;height:3px;background:#666;"></div>
<div style="left:755px;top:272px;width:3px;height:3px;background:#666;"></div>
<div style="left:921px;top:158px;width:223px;height:125px;background:#fff;border:1px solid #DCDCDC;"></div>
<svg style="left:921px;top:158px;" width="226" height="127" viewBox="921 158 226 127"><g fill="#000"><rect x="946.80" y="176" width="1.89" height="76.5"/><rect x="950.57" y="176" width="1.89" height="76.5"/><rect x="958.12" y="176" width="3.77" height="59"/><rect x="963.78" y="176" width="1.89" height="59"/><rect x="971.32" y="176" width="3.77" height="59"/><rect x="976.98" y="176" width="1.89" height="59"/><rect x="982.64" y="176" width="3.77" height="59"/><rect x="990.19" y="176" width="1.89" height="59"/><rect x="995.84" y="176" width="1.89" height="59"/><rect x="1001.50" y="176" width="3.77" height="59"/><rect x="1007.16" y="176" width="7.55" height="59"/><rect x="1016.59" y="176" width="1.89" height="59"/><rect x="1020.37" y="176" width="1.89" height="59"/><rect x="1027.91" y="176" width="3.77" height="59"/><rect x="1033.57" y="176" width="1.89" height="76.5"/><rect x="1037.34" y="176" width="1.89" height="76.5"/><rect x="1041.12" y="176" width="1.89" height="59"/><rect x="1046.77" y="176" width="5.66" height="59"/><rect x="1054.32" y="176" width="1.89" height="59"/><rect x="1058.09" y="176" width="1.89" height="59"/><rect x="1067.52" y="176" width="1.89" height="59"/><rect x="1075.07" y="176" width="1.89" height="59"/><rect x="1080.73" y="176" width="1.89" height="59"/><rect x="1086.39" y="176" width="1.89" height="59"/><rect x="1093.93" y="176" width="5.66" height="59"/><rect x="1101.48" y="176" width="1.89" height="59"/><rect x="1107.14" y="176" width="5.66" height="59"/><rect x="1116.57" y="176" width="1.89" height="59"/><rect x="1120.34" y="176" width="1.89" height="76.5"/><rect x="1124.11" y="176" width="1.89" height="76.5"/></g></svg>
<span class="t" style="top:237.22px;font-size:21px;line-height:27px;font-family:'Liberation Sans',sans-serif;color:#000;left:933.30px;">0</span>
<span class="t" style="top:237.22px;font-size:21px;line-height:27px;font-family:'Liberation Sans',sans-serif;color:#000;letter-spacing:1.144px;left:954.60px;">001234</span>
<span class="t" style="top:237.22px;font-size:21px;line-height:27px;font-family:'Liberation Sans',sans-serif;color:#000;letter-spacing:1.244px;left:1040.40px;">567890</span>
<div style="left:916px;top:292px;width:227px;height:22px;background:#fff;border:1px solid #BEBEBE;"></div>
<div style="left:1120px;top:293px;width:24px;height:22px;background:#E6E6E6;"></div>
<div style="left:1120px;top:293px;width:1px;height:22px;background:#C8C8C8;"></div>
<svg style="left:1126.5px;top:300.5px;" width="11" height="9" viewBox="0 0 11 9"><path d="M1 1.2 L5.5 6.4 L10 1.2" fill="none" stroke="#767676" stroke-width="2.8"/></svg>
<span class="t" style="top:294.61px;font-size:15px;line-height:20px;font-family:'DejaVu Sans Condensed','Liberation Sans',sans-serif;color:#303030;letter-spacing:-0.405px;left:919.00px;">Aktif Stok</span>
<div style="left:1157px;top:158px;width:118px;height:790px;background:#fff;border:1px solid #DEDEDE;"></div>
<svg style="left:1202px;top:179px;" width="30" height="30" viewBox="0 0 30 30"><defs><linearGradient id="fg" x1="0" y1="0" x2="1" y2="1"><stop offset="0" stop-color="#9C9CC0"/><stop offset="0.5" stop-color="#7676A0"/><stop offset="1" stop-color="#54547C"/></linearGradient><linearGradient id="fl" x1="0" y1="0" x2="0" y2="1"><stop offset="0" stop-color="#FDFDFD"/><stop offset="1" stop-color="#D9D9DC"/></linearGradient></defs><g transform="translate(0.5,0.3) scale(1.0)"><path d="M0.5 0 H23.5 L28 4.5 V28 H0.5 Z" fill="url(#fg)"/><rect x="6.5" y="0" width="14.5" height="10.5" fill="#E4E4EE"/><rect x="14.2" y="1.6" width="3.6" height="7" fill="#5d5d88"/><rect x="4.5" y="14.5" width="19.5" height="13.5" fill="url(#fl)"/></g><rect x="2" y="28.3" width="26" height="1.2" fill="#d6d6de"/></svg>
<span class="t" style="top:212.11px;font-size:15px;line-height:20px;font-family:'DejaVu Sans Condensed','Liberation Sans',sans-serif;color:#303030;letter-spacing:-0.203px;left:1194.00px;"><u>K</u>aydet</span>
<svg style="left:1201px;top:240px;" width="32" height="31" viewBox="0 0 32 31"><g transform="translate(1,1.2) scale(0.68)"><path d="M0.5 0 H23.5 L28 4.5 V28 H0.5 Z" fill="url(#fg)"/><rect x="6.5" y="0" width="14.5" height="10.5" fill="#E4E4EE"/><rect x="14.2" y="1.6" width="3.6" height="7" fill="#5d5d88"/><rect x="4.5" y="14.5" width="19.5" height="13.5" fill="url(#fl)"/></g><g transform="translate(9.6,9.4) scale(0.7)"><path d="M0.5 0 H23.5 L28 4.5 V28 H0.5 Z" fill="url(#fg)"/><rect x="6.5" y="0" width="14.5" height="10.5" fill="#E4E4EE"/><rect x="14.2" y="1.6" width="3.6" height="7" fill="#5d5d88"/><rect x="4.5" y="14.5" width="19.5" height="13.5" fill="url(#fl)"/></g></svg>
<span class="t" style="top:274.11px;font-size:15px;line-height:20px;font-family:'DejaVu Sans Condensed','Liberation Sans',sans-serif;color:#303030;letter-spacing:-0.716px;left:1196.00px;"><u>Ç</u>oğalt</span>
<svg style="left:1198px;top:302px;" width="34" height="32" viewBox="0 0 34 32"><defs><linearGradient id="dg" x1="0" y1="0" x2="1" y2="1"><stop offset="0" stop-color="#6FBDEA"/><stop offset="1" stop-color="#BDE3F7"/></linearGradient></defs><path d="M2.5 9 L9.5 1.5 L21.5 24.5 L13 28 Z" fill="url(#dg)" stroke="#58A5D6" stroke-width="0.8"/><path d="M9.5 1.5 L21.5 24.5 L31 11.5 L24 7 Z" fill="#E8F5FC" stroke="#B7DBEF" stroke-width="0.8"/><path d="M21.5 24.5 L11 13 M21.5 24.5 L31.5 19 M21.5 24.5 L27 9.5" stroke="#A9844A" stroke-width="1"/></svg>
<span class="t" style="top:336.11px;font-size:15px;line-height:20px;font-family:'DejaVu Sans Condensed','Liberation Sans',sans-serif;color:#303030;letter-spacing:-0.574px;left:1188.00px;"><u>D</u>osyalar</span>
<span class="t" style="left:1199px;top:373px;line-height:28px;font:bold 25px/28px 'Liberation Serif',serif;color:#1F3F9A">A</span>
<span class="t" style="left:1215px;top:361px;line-height:28px;font:bold 25px/28px 'Liberation Serif',serif;color:#1F3F9A">B</span>
<svg style="left:1199px;top:364px;" width="34" height="32" viewBox="0 0 34 32"><path d="M3 12 C4 5 10 3 14 5 L14 2 L20 7 L14 12 L14 9 C10 8 7 9 6 13 Z" fill="#45B045" stroke="#2f8f2f" stroke-width="0.6"/><path d="M31 20 C30 27 24 29 20 27 L20 30 L14 25 L20 20 L20 23 C24 24 27 23 28 19 Z" fill="#45B045" stroke="#2f8f2f" stroke-width="0.6"/></svg>
<span class="t" style="top:398.11px;font-size:15px;line-height:20px;font-family:'DejaVu Sans Condensed','Liberation Sans',sans-serif;color:#303030;letter-spacing:-0.157px;left:1177.00px;"><u>H</u>esap Kodu</span>
<span class="t" style="top:416.71px;font-size:15px;line-height:20px;font-family:'DejaVu Sans Condensed','Liberation Sans',sans-serif;color:#303030;letter-spacing:-0.920px;left:1192.80px;">Değiştir</span>
<svg style="left:1201px;top:446px;" width="30" height="30" viewBox="0 0 30 30"><defs><radialGradient id="rg" cx="50%" cy="30%" r="70%"><stop offset="0" stop-color="#F46A6A"/><stop offset="0.6" stop-color="#D81E1E"/><stop offset="1" stop-color="#A30D0D"/></radialGradient></defs><circle cx="15" cy="15" r="14.3" fill="url(#rg)"/><path d="M9.5 9.5 L20.5 20.5 M20.5 9.5 L9.5 20.5" stroke="#fff" stroke-width="3" stroke-linecap="round"/></svg>
<span class="t" style="top:478.71px;font-size:15px;line-height:20px;font-family:'DejaVu Sans Condensed','Liberation Sans',sans-serif;color:#303030;letter-spacing:-0.119px;left:1202.00px;"><u>İ</u>ptal</span>
<div style="left:170px;top:371px;width:974px;height:577px;background:#fff;border:1px solid #B3B3B3;"></div>
<div style="left:232px;top:337px;width:69px;height:33px;background:#fff;border:1px solid #B3B3B3;"></div>
<span class="t" style="top:346.11px;font-size:15px;line-height:20px;font-family:'DejaVu Sans Condensed','Liberation Sans',sans-serif;color:#303030;letter-spacing:-0.647px;left:244.00px;">Fiyatlar</span>
<div style="left:303px;top:337px;width:115px;height:33px;background:#fff;border:1px solid #B3B3B3;"></div>
<span class="t" style="top:346.11px;font-size:15px;line-height:20px;font-family:'DejaVu Sans Condensed','Liberation Sans',sans-serif;color:#303030;letter-spacing:-0.717px;left:315.00px;">Ürün Özellikleri</span>
<div style="left:420px;top:337px;width:99px;height:33px;background:#fff;border:1px solid #B3B3B3;"></div>
<span class="t" style="top:346.11px;font-size:15px;line-height:20px;font-family:'DejaVu Sans Condensed','Liberation Sans',sans-serif;color:#303030;letter-spacing:-0.675px;left:432.00px;"><u>Ö</u>zel Alanlar</span>
<div style="left:521px;top:337px;width:183px;height:33px;background:#fff;border:1px solid #B3B3B3;"></div>
<span class="t" style="top:346.11px;font-size:15px;line-height:20px;font-family:'DejaVu Sans Condensed','Liberation Sans',sans-serif;color:#303030;letter-spacing:-0.323px;left:532.00px;"><u>M</u>uhasebe Entegrasyonu</span>
<div style="left:706px;top:337px;width:118px;height:33px;background:#fff;border:1px solid #B3B3B3;"></div>
<span class="t" style="top:346.11px;font-size:15px;line-height:20px;font-family:'DejaVu Sans Condensed','Liberation Sans',sans-serif;color:#303030;letter-spacing:-0.254px;left:717.50px;"><u>V</u>ergi Tanımları</span>
<div style="left:170px;top:335px;width:61px;height:35px;background:#fff;border:1px solid #B3B3B3;"></div>
<div style="left:171px;top:371px;width:61px;height:1px;background:#fff;"></div>
<span class="t" style="top:345.11px;font-size:15px;line-height:20px;font-family:'DejaVu Sans Condensed','Liberation Sans',sans-serif;color:#303030;letter-spacing:-0.848px;left:183.00px;"><u>G</u>enel</span>
<div style="left:178px;top:396px;width:308px;height:115px;border:1px solid #DADADA;"></div>
<div style="left:186px;top:396px;width:104.5px;height:1px;background:#fff;"></div>
<span class="t" style="top:389.11px;font-size:15px;line-height:20px;font-family:'DejaVu Sans Condensed','Liberation Sans',sans-serif;color:#303030;letter-spacing:-0.499px;left:190.00px;">Stok Kontrolleri</span>
<span class="t" style="top:419.11px;font-size:15px;line-height:20px;font-family:'DejaVu Sans Condensed','Liberation Sans',sans-serif;color:#303030;letter-spacing:-0.484px;left:189.00px;">Uyarı</span>
<div style="left:239px;top:417px;width:234px;height:22px;background:#fff;border:1px solid #BEBEBE;"></div>
<div style="left:450px;top:418px;width:24px;height:22px;background:#E6E6E6;"></div>
<div style="left:450px;top:418px;width:1px;height:22px;background:#C8C8C8;"></div>
<svg style="left:456.5px;top:425.5px;" width="11" height="9" viewBox="0 0 11 9"><path d="M1 1.2 L5.5 6.4 L10 1.2" fill="none" stroke="#767676" stroke-width="2.8"/></svg>
<div style="left:241px;top:419px;width:208px;height:20px;background:#0A76D8;"></div>
<div style="left:241px;top:419px;width:208px;height:20px;outline:1px dotted #111;outline-offset:-1px;"></div>
<span class="t" style="top:419.61px;font-size:15px;line-height:20px;font-family:'DejaVu Sans Condensed','Liberation Sans',sans-serif;color:#fff;letter-spacing:-0.703px;left:242.50px;">Hepsi</span>
<span class="t" style="top:446.61px;font-size:15px;line-height:20px;font-family:'DejaVu Sans Condensed','Liberation Sans',sans-serif;color:#303030;letter-spacing:-0.541px;left:189.00px;">Asgari</span>
<div style="left:239px;top:445px;width:234px;height:22px;background:#fff;border:1px solid #BEBEBE;"></div>
<span class="t" style="top:446.61px;font-size:15px;line-height:20px;font-family:'DejaVu Sans Condensed','Liberation Sans',sans-serif;color:#303030;right:971.00px;">3</span>
<span class="t" style="top:474.61px;font-size:15px;line-height:20px;font-family:'DejaVu Sans Condensed','Liberation Sans',sans-serif;color:#303030;letter-spacing:-0.446px;left:189.00px;">Azami</span>
<div style="left:239px;top:473px;width:234px;height:22px;background:#fff;border:1px solid #BEBEBE;"></div>
<span class="t" style="top:474.61px;font-size:15px;line-height:20px;font-family:'DejaVu Sans Condensed','Liberation Sans',sans-serif;color:#303030;right:971.00px;">10</span>
<div style="left:178px;top:537px;width:308px;height:403px;border:1px solid #DADADA;"></div>
<div style="left:186px;top:537px;width:92px;height:1px;background:#fff;"></div>
<span class="t" style="top:529.61px;font-size:15px;line-height:20px;font-family:'DejaVu Sans Condensed','Liberation Sans',sans-serif;color:#303030;letter-spacing:-0.839px;left:190.00px;">Diğer Birimler</span>
<span class="t" style="top:560.11px;font-size:15px;line-height:20px;font-family:'DejaVu Sans Condensed','Liberation Sans',sans-serif;color:#303030;letter-spacing:-0.550px;left:207.50px;">1 x</span>
<div style="left:239px;top:558px;width:76px;height:22px;background:#fff;border:1px solid #BEBEBE;"></div>
<div style="left:292px;top:559px;width:24px;height:22px;background:#E6E6E6;"></div>
<div style="left:292px;top:559px;width:1px;height:22px;background:#C8C8C8;"></div>
<svg style="left:298.5px;top:566.5px;" width="11" height="9" viewBox="0 0 11 9"><path d="M1 1.2 L5.5 6.4 L10 1.2" fill="none" stroke="#767676" stroke-width="2.8"/></svg>
<span class="t" style="top:560.11px;font-size:15px;line-height:20px;font-family:'DejaVu Sans Condensed','Liberation Sans',sans-serif;color:#303030;left:321.00px;">=</span>
<div style="left:335px;top:558px;width:73px;height:22px;background:#fff;border:1px solid #BEBEBE;"></div>
<span class="t" style="top:560.11px;font-size:15px;line-height:20px;font-family:'DejaVu Sans Condensed','Liberation Sans',sans-serif;color:#303030;right:1036.00px;">0</span>
<span class="t" style="top:560.11px;font-size:15px;line-height:20px;font-family:'DejaVu Sans Condensed','Liberation Sans',sans-serif;color:#303030;letter-spacing:-0.550px;left:415.00px;">Adet</span>
<span class="t" style="top:588.11px;font-size:15px;line-height:20px;font-family:'DejaVu Sans Condensed','Liberation Sans',sans-serif;color:#303030;letter-spacing:-0.550px;left:207.50px;">1 x</span>
<div style="left:239px;top:586px;width:76px;height:22px;background:#fff;border:1px solid #BEBEBE;"></div>
<div style="left:292px;top:587px;width:24px;height:22px;background:#E6E6E6;"></div>
<div style="left:292px;top:587px;width:1px;height:22px;background:#C8C8C8;"></div>
<svg style="left:298.5px;top:594.5px;" width="11" height="9" viewBox="0 0 11 9"><path d="M1 1.2 L5.5 6.4 L10 1.2" fill="none" stroke="#767676" stroke-width="2.8"/></svg>
<span class="t" style="top:588.11px;font-size:15px;line-height:20px;font-family:'DejaVu Sans Condensed','Liberation Sans',sans-serif;color:#303030;left:321.00px;">=</span>
<div style="left:335px;top:586px;width:73px;height:22px;background:#fff;border:1px solid #BEBEBE;"></div>
<span class="t" style="top:588.11px;font-size:15px;line-height:20px;font-family:'DejaVu Sans Condensed','Liberation Sans',sans-serif;color:#303030;right:1036.00px;">0</span>
<span class="t" style="top:588.11px;font-size:15px;line-height:20px;font-family:'DejaVu Sans Condensed','Liberation Sans',sans-serif;color:#303030;letter-spacing:-0.550px;left:415.00px;">Adet</span>
<span class="t" style="top:616.11px;font-size:15px;line-height:20px;font-family:'DejaVu Sans Condensed','Liberation Sans',sans-serif;color:#303030;letter-spacing:-0.550px;left:207.50px;">1 x</span>
<div style="left:239px;top:614px;width:76px;height:22px;background:#fff;border:1px solid #BEBEBE;"></div>
<div style="left:292px;top:615px;width:24px;height:22px;background:#E6E6E6;"></div>
<div style="left:292px;top:615px;width:1px;height:22px;background:#C8C8C8;"></div>
<svg style="left:298.5px;top:622.5px;" width="11" height="9" viewBox="0 0 11 9"><path d="M1 1.2 L5.5 6.4 L10 1.2" fill="none" stroke="#767676" stroke-width="2.8"/></svg>
<span class="t" style="top:616.11px;font-size:15px;line-height:20px;font-family:'DejaVu Sans Condensed','Liberation Sans',sans-serif;color:#303030;left:321.00px;">=</span>
<div style="left:335px;top:614px;width:73px;height:22px;background:#fff;border:1px solid #BEBEBE;"></div>
<span class="t" style="top:616.11px;font-size:15px;line-height:20px;font-family:'DejaVu Sans Condensed','Liberation Sans',sans-serif;color:#303030;right:1036.00px;">0</span>
<span class="t" style="top:616.11px;font-size:15px;line-height:20px;font-family:'DejaVu Sans Condensed','Liberation Sans',sans-serif;color:#303030;letter-spacing:-0.550px;left:415.00px;">Adet</span>
<span class="t" style="top:644.11px;font-size:15px;line-height:20px;font-family:'DejaVu Sans Condensed','Liberation Sans',sans-serif;color:#303030;letter-spacing:-0.550px;left:207.50px;">1 x</span>
<div style="left:239px;top:642px;width:76px;height:22px;background:#fff;border:1px solid #BEBEBE;"></div>
<div style="left:292px;top:643px;width:24px;height:22px;background:#E6E6E6;"></div>
<div style="left:292px;top:643px;width:1px;height:22px;background:#C8C8C8;"></div>
<svg style="left:298.5px;top:650.5px;" width="11" height="9" viewBox="0 0 11 9"><path d="M1 1.2 L5.5 6.4 L10 1.2" fill="none" stroke="#767676" stroke-width="2.8"/></svg>
<span class="t" style="top:644.11px;font-size:15px;line-height:20px;font-family:'DejaVu Sans Condensed','Liberation Sans',sans-serif;color:#303030;left:321.00px;">=</span>
<div style="left:335px;top:642px;width:73px;height:22px;background:#fff;border:1px solid #BEBEBE;"></div>
<span class="t" style="top:644.11px;font-size:15px;line-height:20px;font-family:'DejaVu Sans Condensed','Liberation Sans',sans-serif;color:#303030;right:1036.00px;">0</span>
<span class="t" style="top:644.11px;font-size:15px;line-height:20px;font-family:'DejaVu Sans Condensed','Liberation Sans',sans-serif;color:#303030;letter-spacing:-0.550px;left:415.00px;">Adet</span>
<div style="left:500px;top:396px;width:636px;height:115px;border:1px solid #DADADA;"></div>
<div style="left:508px;top:396px;width:173px;height:1px;background:#fff;"></div>
<span class="t" style="top:389.11px;font-size:15px;line-height:20px;font-family:'DejaVu Sans Condensed','Liberation Sans',sans-serif;color:#303030;letter-spacing:-0.662px;left:512.00px;">Diğer Dillerdeki Stok Adları</span>
<svg style="left:512px;top:422px;" width="22" height="15" viewBox="0 0 22 15"><rect width="22" height="15" fill="#2B3F8F"/><path d="M0 0 L22 15 M22 0 L0 15" stroke="#fff" stroke-width="3"/><path d="M0 0 L22 15 M22 0 L0 15" stroke="#D8274A" stroke-width="1.2"/><path d="M11 0 V15 M0 7.5 H22" stroke="#fff" stroke-width="5"/><path d="M11 0 V15 M0 7.5 H22" stroke="#D8274A" stroke-width="2.6"/></svg>
<svg style="left:512px;top:450px;" width="22" height="15" viewBox="0 0 22 15"><rect width="22" height="5" fill="#111"/><rect y="5" width="22" height="5" fill="#D32F1E"/><rect y="10" width="22" height="5" fill="#F6C928"/></svg>
<svg style="left:512px;top:478px;" width="22" height="15" viewBox="0 0 22 15"><rect width="7.5" height="15" fill="#1F4FA8"/><rect x="7.5" width="7" height="15" fill="#fff"/><rect x="14.5" width="7.5" height="15" fill="#E5453A"/></svg>
<span class="t" style="top:419.11px;font-size:15px;line-height:20px;font-family:'DejaVu Sans Condensed','Liberation Sans',sans-serif;color:#303030;letter-spacing:-0.709px;left:538.00px;">İngilizce</span>
<div style="left:632px;top:417px;width:492px;height:22px;background:#fff;border:1px solid #BEBEBE;"></div>
<span class="t" style="top:447.11px;font-size:15px;line-height:20px;font-family:'DejaVu Sans Condensed','Liberation Sans',sans-serif;color:#303030;letter-spacing:-0.690px;left:538.00px;">Almanca</span>
<div style="left:632px;top:445px;width:492px;height:22px;background:#fff;border:1px solid #BEBEBE;"></div>
<span class="t" style="top:475.11px;font-size:15px;line-height:20px;font-family:'DejaVu Sans Condensed','Liberation Sans',sans-serif;color:#303030;letter-spacing:-0.387px;left:538.00px;">Fransızca</span>
<div style="left:632px;top:473px;width:492px;height:22px;background:#fff;border:1px solid #BEBEBE;"></div>
<div style="left:500px;top:532px;width:636px;height:193px;border:1px solid #DADADA;"></div>
<div style="left:508px;top:532px;width:117.5px;height:1px;background:#fff;"></div>
<span class="t" style="top:525.11px;font-size:15px;line-height:20px;font-family:'DejaVu Sans Condensed','Liberation Sans',sans-serif;color:#303030;letter-spacing:-0.375px;left:512.00px;">Özel Stok Kodları</span>
<span class="t" style="top:555.11px;font-size:15px;line-height:20px;font-family:'DejaVu Sans Condensed','Liberation Sans',sans-serif;color:#303030;letter-spacing:-0.213px;left:512.00px;">1. Stok Kodu</span>
<div style="left:632px;top:553px;width:196px;height:22px;background:#fff;border:1px solid #BEBEBE;"></div>
<span class="t" style="top:555.11px;font-size:15px;line-height:20px;font-family:'DejaVu Sans Condensed','Liberation Sans',sans-serif;color:#303030;letter-spacing:-0.122px;left:839.00px;">4. Stok Kodu</span>
<div style="left:929px;top:553px;width:195px;height:22px;background:#fff;border:1px solid #BEBEBE;"></div>
<span class="t" style="top:583.11px;font-size:15px;line-height:20px;font-family:'DejaVu Sans Condensed','Liberation Sans',sans-serif;color:#303030;letter-spacing:-0.213px;left:512.00px;">2. Stok Kodu</span>
<div style="left:632px;top:581px;width:196px;height:22px;background:#fff;border:1px solid #BEBEBE;"></div>
<span class="t" style="top:583.11px;font-size:15px;line-height:20px;font-family:'DejaVu Sans Condensed','Liberation Sans',sans-serif;color:#303030;letter-spacing:-0.122px;left:839.00px;">5. Stok Kodu</span>
<div style="left:929px;top:581px;width:195px;height:22px;background:#fff;border:1px solid #BEBEBE;"></div>
<span class="t" style="top:611.11px;font-size:15px;line-height:20px;font-family:'DejaVu Sans Condensed','Liberation Sans',sans-serif;color:#303030;letter-spacing:-0.213px;left:512.00px;">3. Stok Kodu</span>
<div style="left:632px;top:609px;width:196px;height:22px;background:#fff;border:1px solid #BEBEBE;"></div>
<span class="t" style="top:611.11px;font-size:15px;line-height:20px;font-family:'DejaVu Sans Condensed','Liberation Sans',sans-serif;color:#303030;letter-spacing:-0.122px;left:839.00px;">6. Stok Kodu</span>
<div style="left:929px;top:609px;width:195px;height:22px;background:#fff;border:1px solid #BEBEBE;"></div>
<div style="left:500px;top:746px;width:636px;height:194px;border:1px solid #DADADA;"></div>
<div style="left:508.29999999999995px;top:746px;width:149.70000000000005px;height:1px;background:#fff;"></div>
<span class="t" style="top:739.61px;font-size:15px;line-height:20px;font-family:'DejaVu Sans Condensed','Liberation Sans',sans-serif;color:#303030;letter-spacing:-0.572px;left:512.30px;">Varsayılan Açıklamalar</span>
<span class="t" style="top:768.61px;font-size:15px;line-height:20px;font-family:'DejaVu Sans Condensed','Liberation Sans',sans-serif;color:#303030;letter-spacing:-0.318px;left:511.00px;">Varsayılan Ek :</span>
<div style="left:632px;top:767px;width:492px;height:22px;background:#fff;border:1px solid #BEBEBE;"></div>
<span class="t" style="top:811.61px;font-size:15px;line-height:20px;font-family:'DejaVu Sans Condensed','Liberation Sans',sans-serif;color:#303030;letter-spacing:-0.394px;left:511.00px;">Varsayılan Geniş :</span>
<div style="left:632px;top:795px;width:492px;height:51px;background:#fff;border:1px solid #BEBEBE;"></div>
<div style="left:1106px;top:796px;width:19px;height:51px;background:#EFEFEF;"></div>
<svg style="left:1110px;top:801px;" width="11" height="7" viewBox="0 0 11 7"><path d="M1.5 6 L5.5 1.5 L9.5 6" fill="none" stroke="#C2C2C2" stroke-width="1.5"/></svg>
<svg style="left:1110px;top:835px;" width="11" height="7" viewBox="0 0 11 7"><path d="M1.5 1 L5.5 5.5 L9.5 1" fill="none" stroke="#C2C2C2" stroke-width="1.5"/></svg>
<svg style="left:155px;top:372px;" width="350" height="158" viewBox="155 372 350 158"><path fill-rule="evenodd" fill="#FFFF00" d="M164.4 376 L501 376 L496.7 525.8 L159.5 525.8 Z M174 386 L169.9 516 L487.7 516 L491 386 Z"/></svg>
</div></body></html>
